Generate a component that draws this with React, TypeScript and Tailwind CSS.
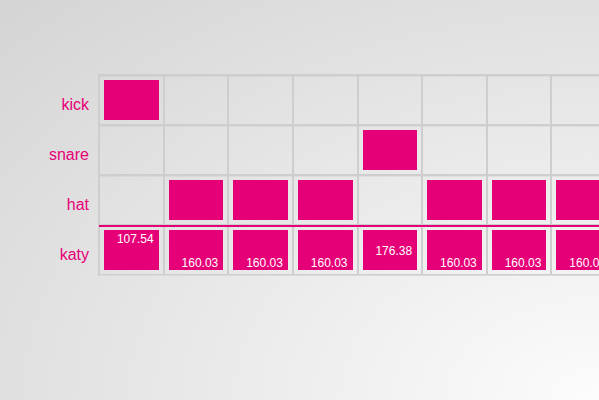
import { useState } from "react";

const STEPS = Array.from({ length: 16 }, (_, i) => i);

type Step = { on: boolean; value?: string };

const beat = (i: number, phase: number) => i % 8 === phase;

const TRACKS: { name: string; steps: Step[] }[] = [
  { name: "kick", steps: STEPS.map((i) => ({ on: beat(i, 0) })) },
  { name: "snare", steps: STEPS.map((i) => ({ on: beat(i, 4) })) },
  { name: "hat", steps: STEPS.map((i) => ({ on: i % 4 !== 0 })) },
  {
    name: "katy",
    steps: STEPS.map((i) => ({
      on: true,
      value: beat(i, 0) ? "107.54" : beat(i, 4) ? "176.38" : "160.03",
    })),
  },
];

const ALIGN: Record<string, string> = {
  "107.54": "items-start",
  "176.38": "items-center",
  "160.03": "items-end",
};

function Cell({ step, labelId }: { step: Step; labelId: string }) {
  const [on, setOn] = useState(step.on);
  return (
    <div className="h-full border border-[#cecece] p-1 shadow-[inset_0_1px_0_rgba(0,0,0,0.04)]">
      <button
        type="button"
        aria-pressed={on}
        aria-labelledby={labelId}
        onClick={() => setOn(!on)}
        className={`flex h-10 w-full justify-end pt-0.5 pr-[5px] text-xs leading-[14px] text-white ${
          on ? "bg-[#e60077]" : "bg-transparent"
        } ${step.value ? ALIGN[step.value] : ""}`}
      >
        {on && step.value}
      </button>
    </div>
  );
}

export default function App() {
  return (
    <main className="min-h-screen overflow-hidden bg-[radial-gradient(ellipse_farthest-corner_at_100%_100%,#fcfcfc,#d4d4d4)] pt-[74px] font-['Liberation_Sans',Arial,sans-serif]">
      <div className="flex">
        <div className="w-[98px] shrink-0 pt-px pr-[9px] text-right text-base text-[#e60077]">
          {TRACKS.map((t) => (
            <div key={t.name} id={t.name} className="h-[50px] pt-[18px] leading-6">
              {t.name}
            </div>
          ))}
        </div>
        <div className="w-[1036px] shrink-0 border border-[#cecece] border-b-[#dadada]">
          {TRACKS.map((t) => (
            <div key={t.name} className="relative grid h-[50px] grid-cols-[repeat(16,minmax(0,1fr))]">
              {t.steps.map((s, i) => (
                <Cell key={i} step={s} labelId={t.name} />
              ))}
              {t.name === "katy" && <div className="absolute inset-x-0 top-0 h-0.5 bg-[#e60077]" />}
            </div>
          ))}
        </div>
      </div>
    </main>
  );
}
